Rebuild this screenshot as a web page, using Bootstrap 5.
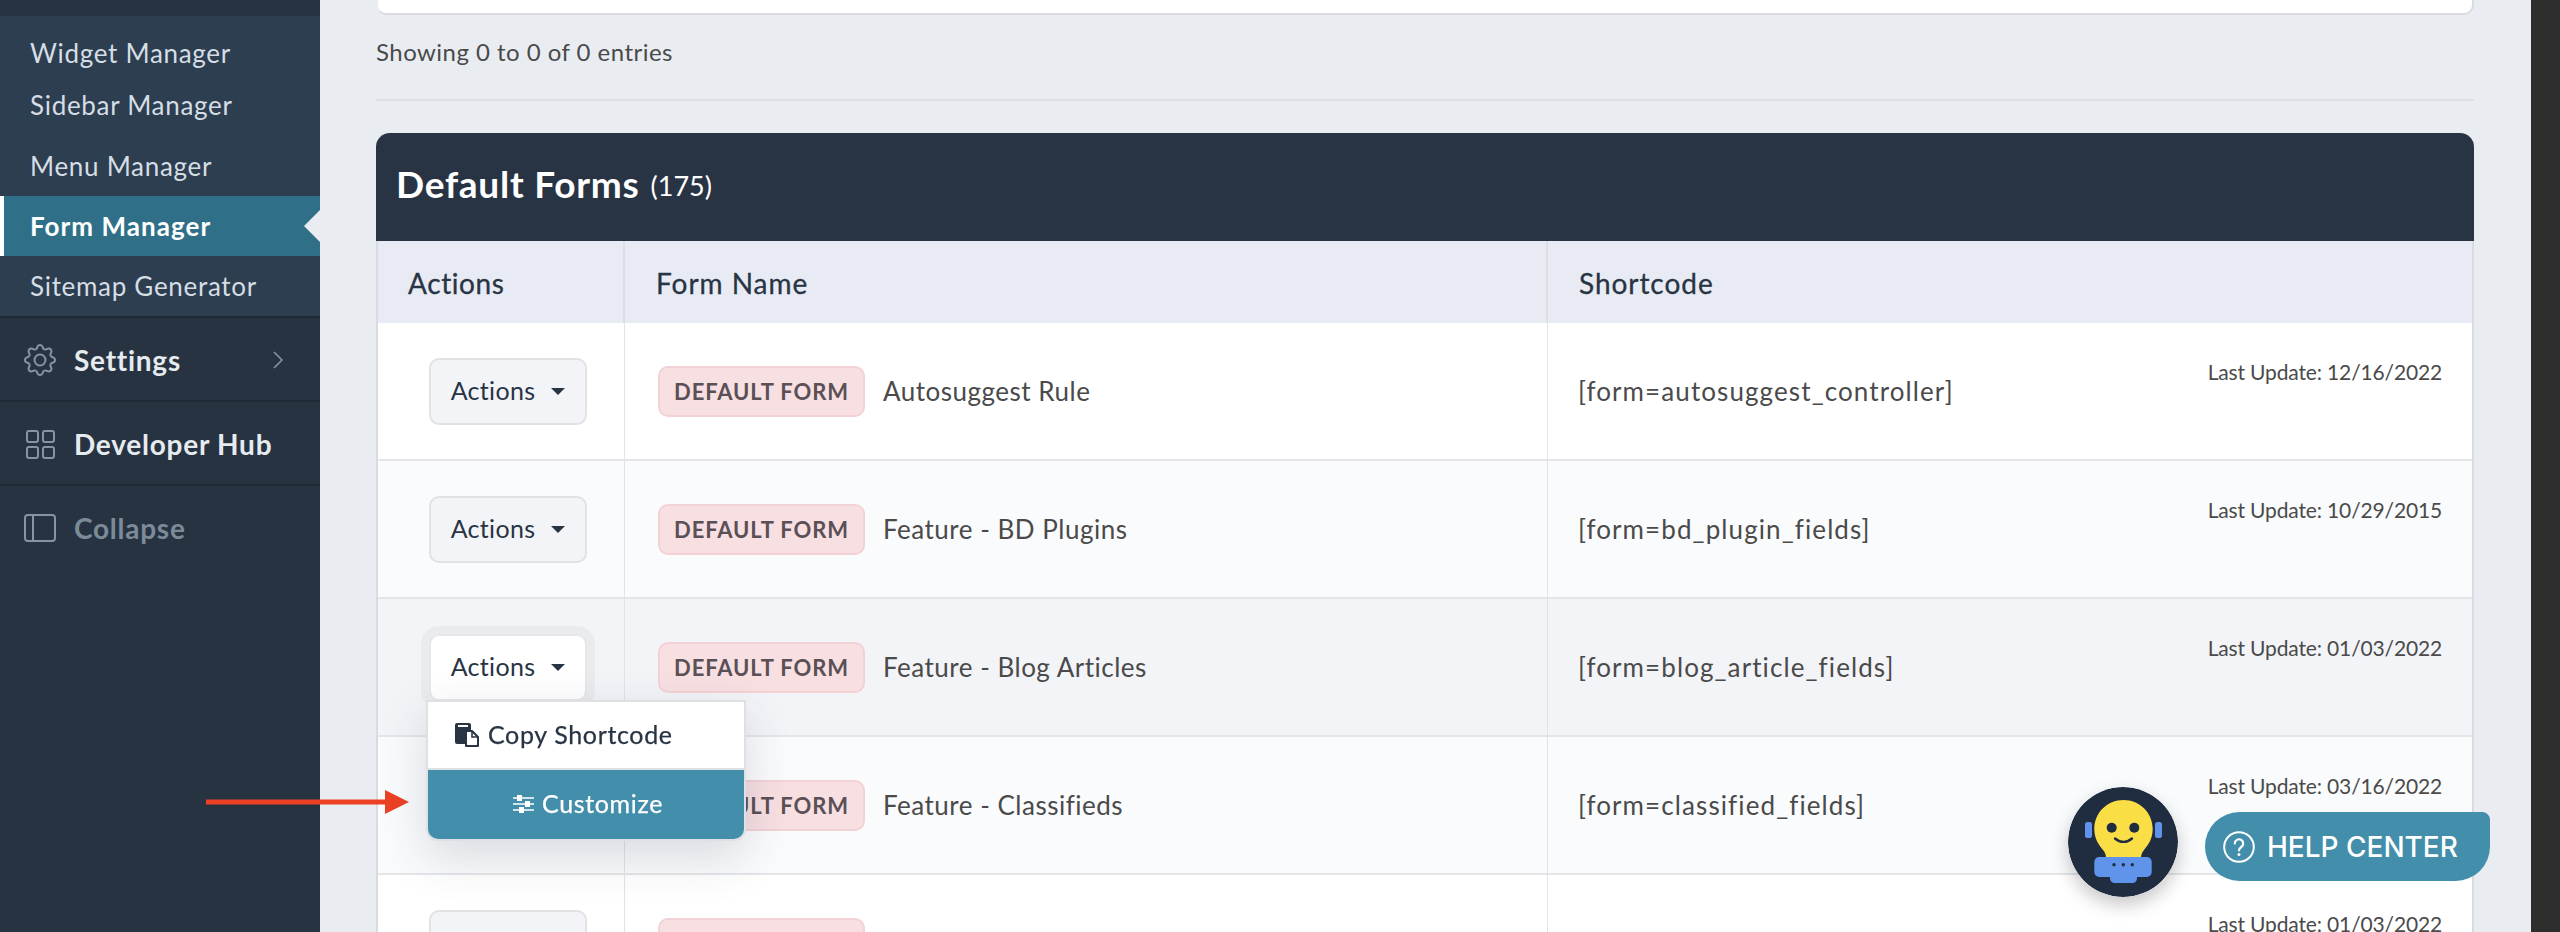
<!DOCTYPE html>
<html lang="en">
<head>
<meta charset="utf-8">
<title>Form Manager</title>
<link href="https://cdn.jsdelivr.net/npm/bootstrap@5.3.0/dist/css/bootstrap.min.css" rel="stylesheet">
<style>
html,body{height:932px;overflow:hidden}
body{font-family:"Lato","Open Sans",sans-serif;background:#e9edf2;color:#4a4a4a;font-size:25px}
.shell{height:932px}
.side{width:320px;flex:none;background:#273341;padding-top:16px}
.subpanel{background:#2d3e50;padding-top:11px;height:300px}
.sublink{height:60px;display:flex;align-items:center;padding:1px 0 0 30px;color:#d5dde5;font-size:26px;letter-spacing:.7px;text-decoration:none;position:relative}
.sublink.tight{height:52px}
.sublink.gapafter{margin-bottom:5px}
.sublink.on{background:#2f7088;color:#fff;font-weight:700;border-left:4px solid #fff;padding-left:26px;letter-spacing:1.05px}
.sublink.on::after{content:"";position:absolute;right:0;top:14px;border-style:solid;border-width:16px 16px 16px 0;border-color:transparent #e9edf2 transparent transparent}
.sidelink{height:84px;border-top:2px solid #1f2a36;padding:2px 0 0 24px;display:flex;align-items:center;color:#e6ebf0;font-size:28px;font-weight:700;letter-spacing:.75px;text-decoration:none}
.sidelink.dim{color:#7c8b9a}
.sideico{width:32px;height:32px;margin-right:18px;flex:none;fill:none;stroke:#8795a3;stroke-width:2}
.sideico.solid{fill:#8795a3;stroke:none}
.chev{margin-left:auto;margin-right:36px;width:12px;height:18px;fill:none;stroke:#8795a3;stroke-width:1.6}
.content{flex:1 1 auto;padding:0 57px 0 56px;min-width:0}
.edge{width:29px;flex:none;background:#2d2d2d}
.topcard{height:15px;background:#fff;border:2px solid #d9dbde;border-top:0;border-radius:0 0 10px 10px;border-left-color:#e9edf2}
.showing{height:36px;line-height:36px;margin-top:19px;font-size:24px;letter-spacing:.47px;color:#4a4a4a}
.rule{height:2px;background:#dedfe3;margin-top:29px;margin-bottom:32px}
.titlebar{height:108px;background:#283444;color:#fff;border-radius:14px 14px 0 0;padding:0 0 5px 20px;display:flex;align-items:center;margin:0}
.titlebar b{font-size:37px;font-weight:700;letter-spacing:.75px;margin-right:11px}
.titlebar span{font-size:27px;font-weight:400;padding-top:4px}
.forms{table-layout:fixed;width:100%;border-collapse:separate;border-spacing:0;margin:0;border-left:2px solid #d9dbde;border-right:2px solid #d9dbde}
.forms>thead>tr>th{--bs-table-bg:#e8ebf3;height:82px;padding:2px 0 0 31px;font-size:28px;font-weight:400;color:#283444;letter-spacing:.95px;border-bottom:0;border-right:2px solid #dcdee3;vertical-align:middle;-webkit-text-stroke:.3px #283444}
.forms>tbody>tr>td{height:138px;padding:0 0 0 33px;border-bottom:2px solid #e4e5e8;border-right:1px solid #e2e3e6;vertical-align:middle;font-size:26px;color:#4a4a4a;letter-spacing:.5px;box-shadow:none}
.forms>thead>tr>th:last-child,.forms>tbody>tr>td:last-child{border-right:0}
.forms .cola{width:247px}
.forms .colb{width:923px}
.forms>tbody>tr>td.actcell{padding-left:51px}
.forms>thead>tr>th:first-child{padding-left:30px;letter-spacing:.6px}
.forms>tbody>tr>td.codecell{padding-left:30px;letter-spacing:1.1px}
.tone-white{--bs-table-bg:#fff}
.tone-soft{--bs-table-bg:#fafbfd}
.tone-hover{--bs-table-bg:#f3f4f8}
.actbtn{width:158px;height:67px;padding:0;background:#f3f4f8;border:2px solid #e0e2e6;border-radius:10px;color:#283444;font-size:25px;letter-spacing:.3px;display:flex;align-items:center;justify-content:center}
.actbtn::after{margin-left:16px;vertical-align:middle;border-top-width:7px;border-right-width:7px;border-left-width:7px;border-bottom:0}
.actbtn.open{background:#fff;box-shadow:0 0 0 8px #eaebed;border-color:#e6e7ea}
.popmenu{top:66px;left:-3px;width:320px;min-width:0;padding:0;border:2px solid #dfe0e3;border-radius:0 0 12px 12px;box-shadow:0 16px 48px rgba(40,52,68,.16);font-size:25px;overflow:hidden;--bs-dropdown-link-hover-bg:transparent}
.popmenu .dropdown-item{height:66px;display:flex;align-items:center;padding:0 0 0 27px;color:#283444;font-weight:400;letter-spacing:.65px;-webkit-text-stroke:.25px #283444}
.popmenu .dropdown-item.go{height:71px;border-top:2px solid #dfe0e3;background:#428eab;color:#fff;justify-content:center;padding:0 0 0 4px;-webkit-text-stroke:.25px #fff}
.formtag{width:207px;height:51px;line-height:47px;padding:0;margin-right:18px;background:#f8dfe2;border:2px solid #f3d2d6;border-radius:10px;color:#5a5055;font-size:22px;font-weight:700;letter-spacing:.9px;vertical-align:middle;flex:none}
.stamp{margin-left:auto;margin-right:30px;margin-bottom:38px;font-size:21px;line-height:30px;color:#4a4a4a;letter-spacing:-.15px;white-space:nowrap}
.pointer{position:fixed;left:206px;top:790px;width:203px;height:24px}
.helpdock{position:fixed;left:2068px;top:787px;width:422px;height:110px}
.botdisc{position:absolute;left:0;top:0;width:110px;height:110px;border-radius:50%;box-shadow:0 8px 18px rgba(0,0,0,.22)}
.helpbtn{position:absolute;left:137px;top:25px;width:285px;height:69px;background:#428eab;border:0;border-radius:35px 8px 35px 35px;color:#fff;font-family:"Inter",sans-serif;font-weight:500;font-size:28px;display:flex;align-items:center;padding:0 0 0 18px;white-space:nowrap}
.helpbtn svg{margin-right:12px;flex:none}
</style>
</head>
<body>
<div class="d-flex shell">
  <aside class="side d-flex flex-column">
    <nav class="subpanel nav flex-column">
      <a class="sublink tight" href="#">Widget Manager</a>
      <a class="sublink tight gapafter" href="#">Sidebar Manager</a>
      <a class="sublink" href="#">Menu Manager</a>
      <a class="sublink on" href="#">Form Manager</a>
      <a class="sublink" href="#">Sitemap Generator</a>
    </nav>
    <a class="sidelink" href="#">
      <svg class="sideico solid" viewBox="0 0 16 16"><path d="M8 4.754a3.246 3.246 0 1 0 0 6.492 3.246 3.246 0 0 0 0-6.492zM5.754 8a2.246 2.246 0 1 1 4.492 0 2.246 2.246 0 0 1-4.492 0z"/><path d="M9.796 1.343c-.527-1.79-3.065-1.79-3.592 0l-.094.319a.873.873 0 0 1-1.255.52l-.292-.16c-1.64-.892-3.433.902-2.54 2.541l.159.292a.873.873 0 0 1-.52 1.255l-.319.094c-1.79.527-1.79 3.065 0 3.592l.319.094a.873.873 0 0 1 .52 1.255l-.16.292c-.892 1.64.901 3.434 2.541 2.54l.292-.159a.873.873 0 0 1 1.255.52l.094.319c.527 1.79 3.065 1.79 3.592 0l.094-.319a.873.873 0 0 1 1.255-.52l.292.16c1.64.893 3.434-.902 2.54-2.541l-.159-.292a.873.873 0 0 1 .52-1.255l.319-.094c1.79-.527 1.79-3.065 0-3.592l-.319-.094a.873.873 0 0 1-.52-1.255l.16-.292c.893-1.64-.902-3.433-2.541-2.54l-.292.159a.873.873 0 0 1-1.255-.52l-.094-.319zm-2.633.283c.246-.835 1.428-.835 1.674 0l.094.319a1.873 1.873 0 0 0 2.693 1.115l.291-.16c.764-.415 1.6.42 1.184 1.185l-.159.292a1.873 1.873 0 0 0 1.116 2.692l.318.094c.835.246.835 1.428 0 1.674l-.319.094a1.873 1.873 0 0 0-1.115 2.693l.16.291c.415.764-.42 1.6-1.185 1.184l-.291-.159a1.873 1.873 0 0 0-2.693 1.116l-.094.318c-.246.835-1.428.835-1.674 0l-.094-.319a1.873 1.873 0 0 0-2.692-1.115l-.292.16c-.764.415-1.6-.42-1.184-1.185l.159-.291A1.873 1.873 0 0 0 1.945 8.93l-.319-.094c-.835-.246-.835-1.428 0-1.674l.319-.094A1.873 1.873 0 0 0 3.06 4.377l-.16-.292c-.415-.764.42-1.6 1.185-1.184l.292.159a1.873 1.873 0 0 0 2.692-1.115l.094-.319z"/></svg>
      Settings
      <svg class="chev" viewBox="0 0 12 18"><path d="M2 1l8 8-8 8"/></svg>
    </a>
    <a class="sidelink" href="#">
      <svg class="sideico" viewBox="0 0 32 32"><rect x="3" y="3" width="11" height="11" rx="2"/><rect x="19" y="3" width="11" height="11" rx="2"/><rect x="3" y="19" width="11" height="11" rx="2"/><rect x="19" y="19" width="11" height="11" rx="2"/></svg>
      Developer Hub
    </a>
    <a class="sidelink dim" href="#">
      <svg class="sideico" viewBox="0 0 32 32"><rect x="1" y="3" width="30" height="26" rx="3"/><path d="M9 3v26"/></svg>
      Collapse
    </a>
  </aside>

  <main class="content">
    <div class="topcard"></div>
    <div class="showing">Showing 0 to 0 of 0 entries</div>
    <div class="rule"></div>
    <h2 class="titlebar"><b>Default Forms</b><span>(175)</span></h2>
    <table class="table forms">
      <colgroup><col class="cola"><col class="colb"><col></colgroup>
      <thead>
        <tr><th>Actions</th><th>Form Name</th><th>Shortcode</th></tr>
      </thead>
      <tbody>
        <tr class="tone-white">
          <td class="actcell"><button class="btn actbtn dropdown-toggle" type="button">Actions</button></td>
          <td><div class="d-flex align-items-center"><span class="badge formtag">DEFAULT FORM</span>Autosuggest Rule</div></td>
          <td class="codecell"><div class="d-flex align-items-center">[form=autosuggest_controller]<span class="stamp">Last Update: 12/16/2022</span></div></td>
        </tr>
        <tr class="tone-soft">
          <td class="actcell"><button class="btn actbtn dropdown-toggle" type="button">Actions</button></td>
          <td><div class="d-flex align-items-center"><span class="badge formtag">DEFAULT FORM</span>Feature - BD Plugins</div></td>
          <td class="codecell"><div class="d-flex align-items-center">[form=bd_plugin_fields]<span class="stamp">Last Update: 10/29/2015</span></div></td>
        </tr>
        <tr class="tone-hover">
          <td class="actcell">
            <div class="dropdown position-relative">
              <button class="btn actbtn open dropdown-toggle" type="button">Actions</button>
              <div class="dropdown-menu show popmenu">
                <a class="dropdown-item" href="#">
                  <svg width="25" height="24" viewBox="0 0 25 24" class="me-2"><path d="M2 0h12a2 2 0 0 1 2 2v19H2a2 2 0 0 1-2-2V2a2 2 0 0 1 2-2z" fill="#283444"/><rect x="3" y="2" width="10" height="2" fill="#fff"/><path d="M11 8h6l6 6v9H11z" fill="#fff" stroke="#283444" stroke-width="2" stroke-linejoin="round"/><path d="M17 8v6h6" fill="none" stroke="#283444" stroke-width="1.6"/></svg>
                  Copy Shortcode
                </a>
                <a class="dropdown-item go" href="#">
                  <svg width="21" height="18" viewBox="0 0 21 18" class="me-2"><g stroke="#fff" stroke-width="1.5"><path d="M0 3h21M0 9h21M0 15h21"/></g><g fill="#fff"><rect x="4" y="0" width="5" height="6"/><rect x="12" y="6" width="5" height="6"/><rect x="6" y="12" width="5" height="6"/></g></svg>
                  Customize
                </a>
              </div>
            </div>
          </td>
          <td><div class="d-flex align-items-center"><span class="badge formtag">DEFAULT FORM</span>Feature - Blog Articles</div></td>
          <td class="codecell"><div class="d-flex align-items-center">[form=blog_article_fields]<span class="stamp">Last Update: 01/03/2022</span></div></td>
        </tr>
        <tr class="tone-soft">
          <td class="actcell"><button class="btn actbtn dropdown-toggle" type="button">Actions</button></td>
          <td><div class="d-flex align-items-center"><span class="badge formtag">DEFAULT FORM</span>Feature - Classifieds</div></td>
          <td class="codecell"><div class="d-flex align-items-center">[form=classified_fields]<span class="stamp">Last Update: 03/16/2022</span></div></td>
        </tr>
        <tr class="tone-white">
          <td class="actcell"><button class="btn actbtn dropdown-toggle" type="button" aria-label="Actions"></button></td>
          <td><div class="d-flex align-items-center"><span class="badge formtag" aria-label="Default form">&nbsp;</span></div></td>
          <td class="codecell"><div class="d-flex align-items-center"><span class="stamp">Last Update: 01/03/2022</span></div></td>
        </tr>
      </tbody>
    </table>
  </main>
  <div class="edge"></div>
</div>

<svg class="pointer" viewBox="0 0 203 24"><rect x="0" y="9.500" width="180" height="5" fill="#ec4125"/><path d="M179 0l24 12-24 12z" fill="#ec4125"/></svg>

<div class="helpdock">
  <svg class="botdisc" viewBox="0 0 110 110">
    <circle cx="55" cy="55" r="55" fill="#202d40"/>
    <rect x="17" y="35" width="7" height="16" rx="2.500" fill="#6094ea"/>
    <rect x="87" y="35" width="7" height="16" rx="2.500" fill="#6094ea"/>
    <path d="M55.500 13C39 13 26.300 26 26.300 42c0 10 4.700 16 8.700 21 2 2 3 5 3 8h35c0-3 1-6 3-8 4-5 8.700-11 8.700-21C84.700 26 72 13 55.500 13z" fill="#fade45"/>
    <circle cx="43.700" cy="40.700" r="5" fill="#202d40"/>
    <circle cx="66.300" cy="40.700" r="5" fill="#202d40"/>
    <path d="M47 51.500c5 4.500 12 4.500 17 0" fill="none" stroke="#202d40" stroke-width="2.400" stroke-linecap="round"/>
    <rect x="26.300" y="70" width="57.400" height="20" rx="5" fill="#6094ea"/>
    <path d="M42 90h27v1c0 3-2 5-5 5H47c-3 0-5-2-5-5z" fill="#6094ea"/>
    <circle cx="46" cy="77.700" r="1.700" fill="#202d40"/><circle cx="55.300" cy="77.700" r="1.700" fill="#202d40"/><circle cx="64.300" cy="77.700" r="1.700" fill="#202d40"/>
  </svg>
  <button class="helpbtn" type="button">
    <svg width="32" height="32" viewBox="0 0 32 32"><circle cx="16" cy="16" r="14.800" fill="none" stroke="#fff" stroke-width="2"/><path d="M11.800 12.500a4.200 4.200 0 1 1 6.500 3.500c-1.500 1-2.300 1.800-2.300 3.500" fill="none" stroke="#fff" stroke-width="2.200" stroke-linecap="round"/><circle cx="16" cy="23.500" r="1.500" fill="#fff"/></svg>
    HELP CENTER
  </button>
</div>
</body>
</html>
